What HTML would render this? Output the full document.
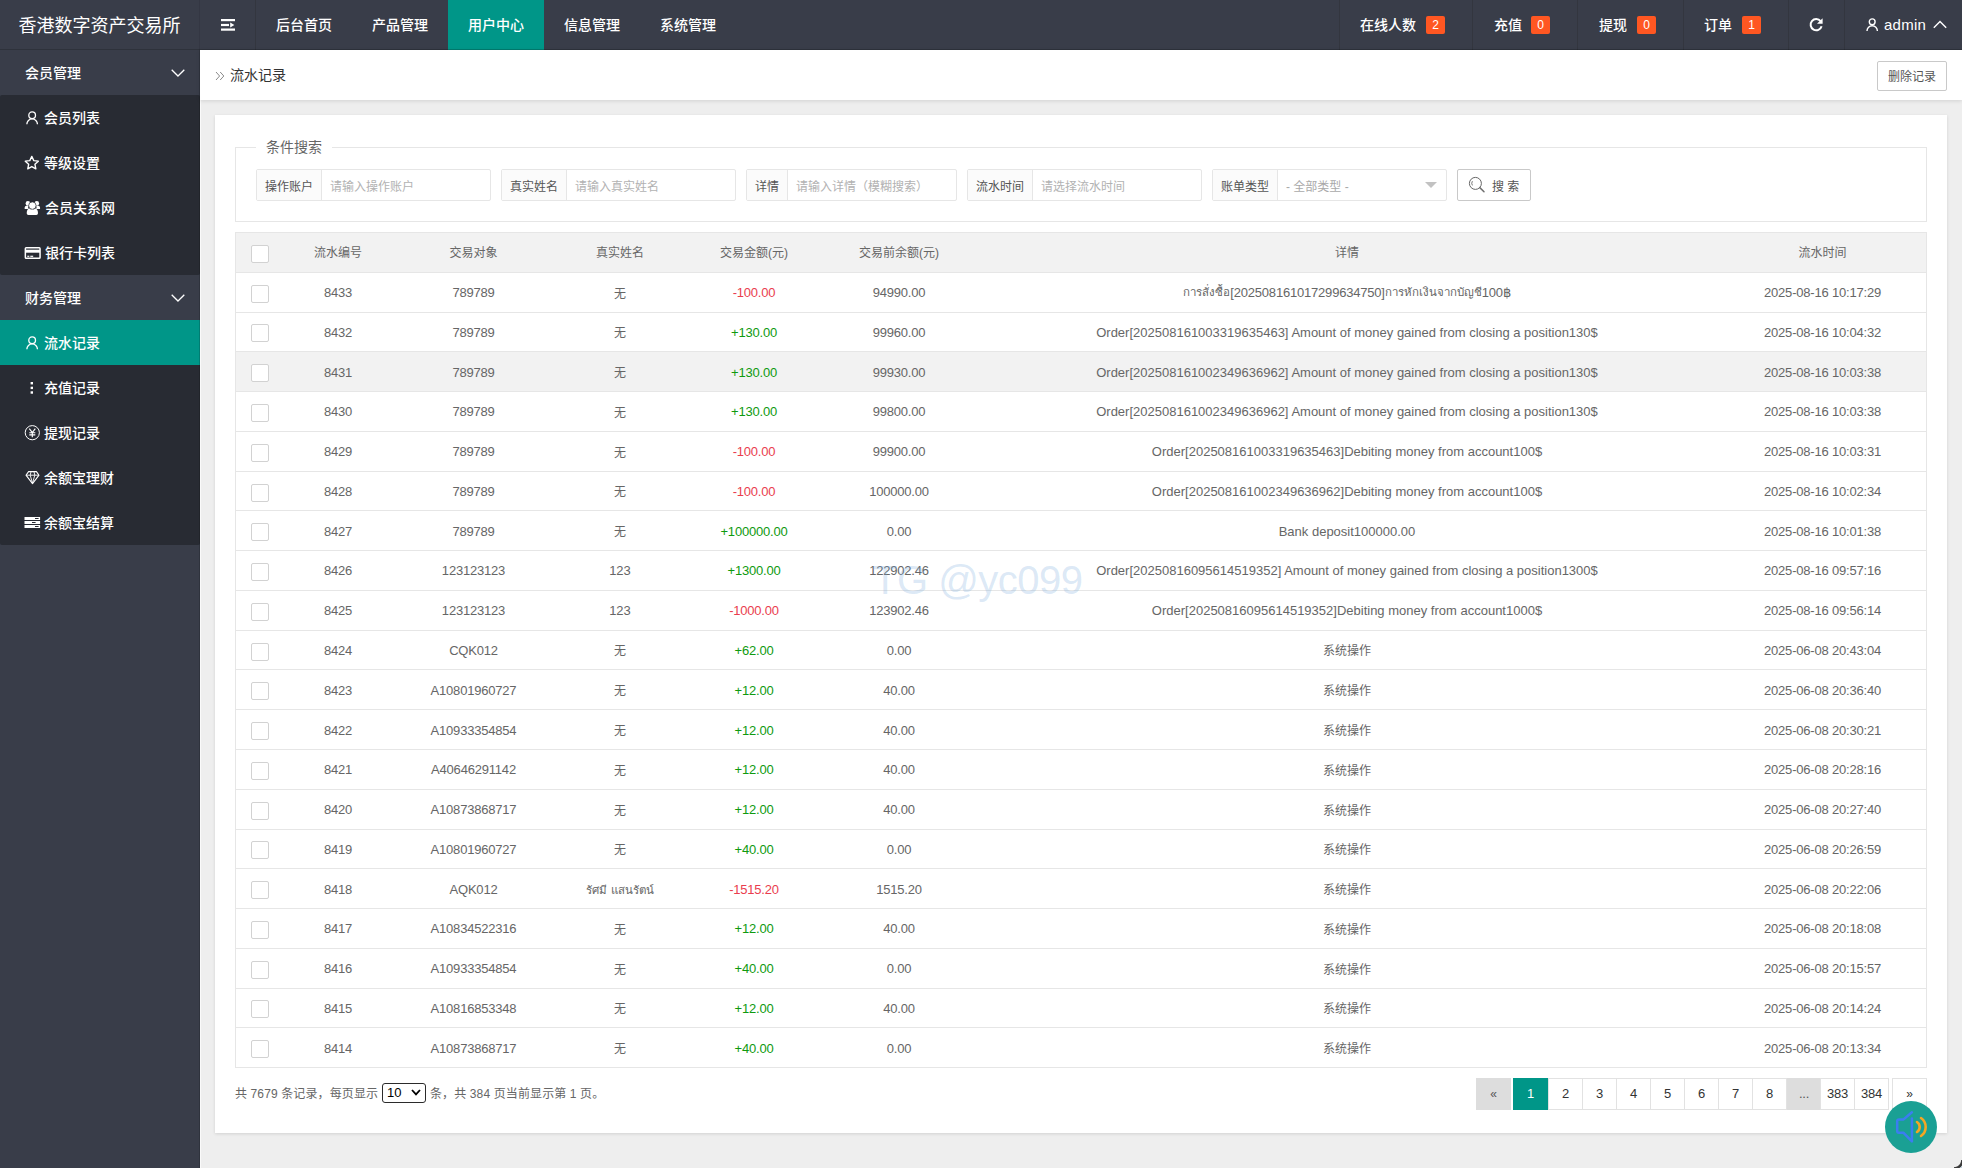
<!DOCTYPE html>
<html lang="zh-CN">
<head>
<meta charset="utf-8">
<title>流水记录</title>
<style>
*{box-sizing:border-box;margin:0;padding:0}
html,body{width:1962px;height:1168px;overflow:hidden}
body{position:relative;background:#eeeeee;font-family:"Liberation Sans","Noto Sans CJK SC",sans-serif;font-size:14px;color:#666;line-height:1}
.abs{position:absolute}
/* header */
#hd{position:absolute;left:0;top:0;width:1962px;height:50px;background:#393D49;color:#fff}
#logo{position:absolute;left:0;top:0;width:200px;height:50px;line-height:52px;text-align:center;font-size:18px;color:#fff;border-right:1px solid #343743}
#tog{position:absolute;left:200px;top:0;width:56px;height:50px;border-right:1px solid #33363f}
.nav{position:absolute;top:0;height:50px;line-height:50px;font-size:14px;color:#fff;text-align:center;white-space:nowrap}
.nav.on{background:#009688}
.rn{position:absolute;top:0;height:50px;line-height:50px;font-size:14px;color:#fff;border-left:1px solid #33363f;white-space:nowrap}
.rn .t{position:absolute;top:0}
.bdg{position:absolute;top:16px;width:19px;height:18px;line-height:18px;background:#FF5722;color:#fff;font-size:12px;text-align:center;border-radius:2px}
/* side */
#side{position:absolute;left:0;top:50px;width:200px;height:1118px;background:#393D49;color:#fff}
.sh{position:relative;height:45px;line-height:47px;padding-left:25px;font-size:14px;color:#fff}
.sh svg{position:absolute;left:171px;top:19px}
.sub{background:#282B33;border-radius:2px}
.si{position:relative;height:45px;line-height:47px;font-size:14px;color:#fff}
.si .tx{position:absolute;left:44px;top:0}
.si svg{position:absolute}
.si.on{background:#009688}
/* crumb */
#crumb{position:absolute;left:200px;top:50px;width:1762px;height:50px;background:#fff;box-shadow:0 1px 4px rgba(0,0,0,.12)}
#crumb .tt{position:absolute;left:30px;top:0;line-height:50px;font-size:14px;color:#333}
#delbtn{position:absolute;left:1677px;top:11px;width:70px;height:30px;line-height:30px;border:1px solid #c9c9c9;border-radius:2px;font-size:12px;color:#555;text-align:center;background:#fff}
/* card */
#card{position:absolute;left:215px;top:115px;width:1732px;height:1018px;background:#fff;box-shadow:0 1px 3px rgba(0,0,0,.12)}
#fs{position:absolute;left:20px;top:32px;width:1692px;height:75px;border:1px solid #e6e6e6}
#lg{position:absolute;left:20px;top:-9px;padding:0 10px;background:#fff;font-size:14px;line-height:16px;color:#666}
.grp{position:absolute;top:21px;height:32px;border:1px solid #e6e6e6;border-radius:2px;background:#fff;font-size:12px}
.grp .lb{position:absolute;left:0;top:0;height:30px;line-height:34px;overflow:hidden;background:#FBFBFB;border-right:1px solid #e6e6e6;color:#555;text-align:center}
.grp .ph{position:absolute;top:0;line-height:34px;margin-left:-1px;color:#b2b2b2;white-space:nowrap}
#sbtn{position:absolute;left:1221px;top:21px;width:74px;height:32px;border:1px solid #c9c9c9;border-radius:2px;background:#fff;font-size:12px;color:#555}
/* table */
#tb{position:absolute;left:20px;top:117px;width:1692px;border:1px solid #e6e6e6;border-bottom:none;font-size:12px;color:#666}
.th,.tr{display:flex;width:100%;border-bottom:1px solid #e6e6e6}
.th{height:39.8px;background:#f2f2f2}
.tr{height:39.78px}
.tr.hover{background:#f2f2f2}
.c{font-size:13px;padding-top:.8px;text-align:center;white-space:nowrap;overflow:visible;display:flex;align-items:center;justify-content:center;height:100%}
.c0{width:48px}.c1{width:108px}.c2{width:163px}.c3{width:130px}.c4{width:138px}.c5{width:152px}.c6{width:744px}.c7{width:207px}
.cb{display:block;position:relative;top:1.5px;width:18px;height:18px;border:1px solid #d2d2d2;border-radius:2px;background:#fff}
.neg{color:#ea3d4e}.pos{color:#0f9a0f}
/* footer */
#ft{position:absolute;left:20px;top:968px;width:500px;height:20px;font-size:12px;color:#666;line-height:20px;white-space:nowrap}
#sel{position:absolute;left:147px;top:0;width:44px;height:20px;border:1px solid #2b2b2b;border-radius:3px;background:#fff;color:#000;font-size:13px;line-height:18px;padding-left:4px}
.pg{position:absolute;top:963px;height:32px;line-height:29px;border:1px solid #e2e2e2;background:#fff;color:#333;font-size:13px;letter-spacing:-0.2px;text-align:center}
.pg.g{background:#ddd;border-color:#ddd;color:#555}
.pg.a{background:#009688;border-color:#009688;color:#fff}
#wm{position:absolute;left:873px;top:557px;font-size:40px;line-height:46px;color:rgba(120,170,220,.27);white-space:nowrap;letter-spacing:-0.5px}
#fab{position:absolute;left:1885px;top:1101px;width:52px;height:52px;border-radius:50%;background:#1AA094}

.th .c,.cj{font-size:12px}
.c1,.c2,.c4,.c5,.c7{letter-spacing:-0.2px}
.th .c{letter-spacing:0}
#ft span{position:absolute;top:1px;letter-spacing:.12px}

.c0{padding-top:0}
.th .c{padding-top:2px}
.th .c0{padding-top:0}
.thai{font-size:13px;letter-spacing:-.2px}.thai .t{font-size:11.5px;letter-spacing:0}

#hd:after{content:"";position:absolute;left:0;bottom:0;width:100%;height:1px;background:rgba(0,0,0,.18)}
#wl{position:absolute;left:200px;top:100px;width:1px;height:1068px;background:#fafafa}

#side:after{content:"";position:absolute;right:0;top:0;width:1px;height:100%;background:rgba(0,0,0,.16)}

#cr{position:absolute;left:1954px;top:1160px;width:8px;height:8px;background:radial-gradient(circle at 0 0,rgba(0,0,0,0) 6.6px,#3a3a3a 7.6px,#3a3a3a 9.2px,#c5d3dc 10px)}
.tr .cj{padding-top:2.8px}
.tr .c3.thai{padding-top:4.8px}
#hd,#side{font-weight:500}
#logo{font-weight:400}

</style>
</head>
<body>
<div id="hd">
  <div id="logo">香港数字资产交易所</div>
  <div id="tog"><svg class="abs" style="left:21px;top:18px" width="15" height="14" viewBox="0 0 15 14"><rect x="0" y="1" width="14" height="2.2" fill="#fff"/><rect x="0" y="5.9" width="8" height="2.2" fill="#fff"/><rect x="0" y="10.5" width="14" height="2.2" fill="#fff"/><path d="M9.2 4.6 L13.4 7 L9.2 9.4Z" fill="#fff"/></svg></div>
  <div class="nav" style="left:256px;width:96px">后台首页</div>
  <div class="nav" style="left:352px;width:96px">产品管理</div>
  <div class="nav on" style="left:448px;width:96px">用户中心</div>
  <div class="nav" style="left:544px;width:96px">信息管理</div>
  <div class="nav" style="left:640px;width:96px">系统管理</div>

  <div class="rn" style="left:1339px;width:133px"><span class="t" style="left:20px">在线人数</span><span class="bdg" style="left:86px">2</span></div>
  <div class="rn" style="left:1472px;width:105px"><span class="t" style="left:21px">充值</span><span class="bdg" style="left:58px">0</span></div>
  <div class="rn" style="left:1577px;width:106px"><span class="t" style="left:21px">提现</span><span class="bdg" style="left:59px">0</span></div>
  <div class="rn" style="left:1683px;width:105px"><span class="t" style="left:20px">订单</span><span class="bdg" style="left:58px">1</span></div>
  <div class="rn" style="left:1788px;width:56px"><svg class="abs" style="left:18.5px;top:17px" width="16" height="16" viewBox="0 0 16 16"><path d="M12.6 4.2 A5.6 5.6 0 1 0 13.6 9.2" fill="none" stroke="#fff" stroke-width="2"/><path d="M14.6 1.2 L14.6 6.8 L9 6.8Z" fill="#fff"/></svg></div>
  <div class="rn" style="left:1844px;width:118px"><svg class="abs" style="left:21px;top:18px" width="13" height="14" viewBox="0 0 13 14"><circle cx="6.2" cy="3.8" r="2.9" fill="none" stroke="#fff" stroke-width="1.4"/><path d="M1 13 A5.2 5.2 0 0 1 11.4 13" fill="none" stroke="#fff" stroke-width="1.4"/></svg><span class="t" style="left:39px;font-size:15px;letter-spacing:.25px">admin</span><svg class="abs" style="left:88px;top:20px" width="14" height="9" viewBox="0 0 14 9"><path d="M0.8 7.8 L7 1.4 L13.2 7.8" fill="none" stroke="#fff" stroke-width="1.4"/></svg></div>
</div>

<div id="side">
  <div class="sh">会员管理<svg width="14" height="8" viewBox="0 0 14 8"><path d="M0.7 0.7 L7 7 L13.3 0.7" fill="none" stroke="#fff" stroke-width="1.3"/></svg></div>
  <div class="sub">
    <div class="si"><svg style="left:26px;top:16px" width="13" height="14" viewBox="0 0 13 14"><circle cx="6.15" cy="4.25" r="3.35" fill="none" stroke="#fff" stroke-width="1.3"/><path d="M0.85 13.2 A5.3 5.3 0 0 1 11.45 13.2" fill="none" stroke="#fff" stroke-width="1.3"/></svg><span class="tx">会员列表</span></div>
    <div class="si"><svg style="left:24.4px;top:14.8px" width="15.6" height="15.6" viewBox="0 0 15 15"><path d="M7.5 1.3 L9.4 5.4 L13.8 5.9 L10.5 8.9 L11.4 13.3 L7.5 11.1 L3.6 13.3 L4.5 8.9 L1.2 5.9 L5.6 5.4Z" fill="none" stroke="#fff" stroke-width="1.3" stroke-linejoin="round"/></svg><span class="tx">等级设置</span></div>
    <div class="si"><svg style="left:24px;top:15px" width="17" height="16" viewBox="0 0 17 16"><circle cx="3.9" cy="3.4" r="2.3" fill="#fff"/><circle cx="12.8" cy="3.4" r="2.3" fill="#fff"/><path d="M0.6 8.4 L0.6 7.8 Q0.6 5.7 2.7 5.7 L4.6 5.7 Q3.6 7.4 4.6 9 L1.4 9 Q0.6 9 0.6 8.4Z" fill="#fff"/><path d="M16.1 8.4 L16.1 7.8 Q16.1 5.7 14 5.7 L12.1 5.7 Q13.1 7.4 12.1 9 L15.3 9 Q16.1 9 16.1 8.4Z" fill="#fff"/><circle cx="8.35" cy="5.6" r="3.7" fill="#fff" stroke="#282B33" stroke-width="0.7"/><path d="M2.7 13.3 Q2.7 8.8 5.3 8.4 Q8.35 10.8 11.4 8.4 Q14 8.8 14 13.3 Q14 15.1 12.3 15.1 L4.4 15.1 Q2.7 15.1 2.7 13.3Z" fill="#fff"/></svg><span class="tx" style="left:45px">会员关系网</span></div>
    <div class="si"><svg style="left:24px;top:16px" width="18" height="14" viewBox="0 0 18 14"><rect x="1.35" y="1.85" width="14.7" height="10.5" rx="0.8" fill="none" stroke="#fff" stroke-width="1.5"/><rect x="1.35" y="3.7" width="14.7" height="3" fill="#fff"/><rect x="3.3" y="9.7" width="2" height="1.2" fill="#fff"/><rect x="6.3" y="9.7" width="2.9" height="1.2" fill="#fff"/></svg><span class="tx" style="left:45px">银行卡列表</span></div>
  </div>
  <div class="sh">财务管理<svg width="14" height="8" viewBox="0 0 14 8"><path d="M0.7 0.7 L7 7 L13.3 0.7" fill="none" stroke="#fff" stroke-width="1.3"/></svg></div>
  <div class="sub">
    <div class="si on"><svg style="left:26px;top:16px" width="13" height="14" viewBox="0 0 13 14"><circle cx="6.15" cy="4.25" r="3.35" fill="none" stroke="#fff" stroke-width="1.3"/><path d="M0.85 13.2 A5.3 5.3 0 0 1 11.45 13.2" fill="none" stroke="#fff" stroke-width="1.3"/></svg><span class="tx">流水记录</span></div>
    <div class="si"><svg style="left:30px;top:16px" width="4" height="14" viewBox="0 0 4 14"><rect x="0.6" y="1" width="2.4" height="2.4" fill="#fff"/><rect x="0.6" y="5.7" width="2.4" height="2.4" fill="#fff"/><rect x="0.6" y="10.3" width="2.4" height="2.4" fill="#fff"/></svg><span class="tx">充值记录</span></div>
    <div class="si"><svg style="left:24px;top:14px" width="17" height="17" viewBox="0 0 17 17"><circle cx="8.3" cy="8.7" r="7.1" fill="none" stroke="#fff" stroke-width="1"/><path d="M5.3 4.6 L8.3 8.5 L11.3 4.6 M8.3 8.5 L8.3 13.3 M5.3 8.7 L11.3 8.7 M5.3 10.8 L11.3 10.8" fill="none" stroke="#fff" stroke-width="1.15"/></svg><span class="tx">提现记录</span></div>
    <div class="si"><svg style="left:24.5px;top:15.3px" width="15" height="15" viewBox="0 0 15 15"><path d="M3.6 1.6 L11.4 1.6 L14 5.2 L7.5 13.6 L1 5.2Z" fill="none" stroke="#fff" stroke-width="1.1" stroke-linejoin="round"/><path d="M1 5.2 L14 5.2 M5.2 5.2 L7.5 13.2 L9.8 5.2 M5.2 5.2 L6 1.8 M9.8 5.2 L9 1.8" fill="none" stroke="#fff" stroke-width="0.9"/></svg><span class="tx">余额宝理财</span></div>
    <div class="si"><svg style="left:24px;top:16px" width="17" height="13" viewBox="0 0 17 13"><rect x="0.5" y="1" width="15.6" height="3" fill="#fff"/><rect x="0.5" y="5" width="15.6" height="3" fill="#fff"/><rect x="0.5" y="9" width="15.6" height="3" fill="#fff"/><rect x="11" y="2" width="3.6" height="1" fill="#282B33"/><rect x="8" y="6" width="3.6" height="1" fill="#282B33"/><rect x="11" y="10" width="3.6" height="1" fill="#282B33"/></svg><span class="tx">余额宝结算</span></div>
  </div>
</div>

<div id="wl"></div>
<div id="crumb">
  <svg class="abs" style="left:15px;top:21px" width="10" height="10" viewBox="0 0 10 10"><path d="M1 1 L4.6 5 L1 9 M5.2 1 L8.8 5 L5.2 9" fill="none" stroke="#8a8a8a" stroke-width="1"/></svg>
  <span class="tt">流水记录</span>
  <div id="delbtn">删除记录</div>
</div>

<div id="card">
  <div id="fs">
    <div id="lg">条件搜索</div>
    <div class="grp" style="left:20px;width:235px"><div class="lb" style="width:65px">操作账户</div><div class="ph" style="left:74px">请输入操作账户</div></div>
    <div class="grp" style="left:265px;width:235px"><div class="lb" style="width:65px">真实姓名</div><div class="ph" style="left:74px">请输入真实姓名</div></div>
    <div class="grp" style="left:510px;width:211px"><div class="lb" style="width:41px">详情</div><div class="ph" style="left:50px">请输入详情（模糊搜索）</div></div>
    <div class="grp" style="left:731px;width:235px"><div class="lb" style="width:65px">流水时间</div><div class="ph" style="left:74px">请选择流水时间</div></div>
    <div class="grp" style="left:976px;width:235px"><div class="lb" style="width:65px">账单类型</div><div class="ph" style="left:74px;color:#a9a9a9">- 全部类型 -</div><i class="abs" style="right:9px;top:12px;width:0;height:0;border:6px solid transparent;border-top-color:#c2c2c2;border-bottom:none"></i></div>
    <div id="sbtn"><svg class="abs" style="left:10px;top:6px" width="18" height="18" viewBox="0 0 18 18"><circle cx="7.4" cy="7.4" r="6" fill="none" stroke="#666" stroke-width="1"/><path d="M4.4 5.2 A3.8 3.8 0 0 0 4.4 9.4" fill="none" stroke="#666" stroke-width="0.9"/><path d="M11.8 11.6 L16 15.8" fill="none" stroke="#707070" stroke-width="1.5" stroke-linecap="round"/></svg><span class="abs" style="left:34px;top:0;line-height:34px;white-space:pre">搜 索</span></div>
  </div>

  <div id="tb">
    <div class="th"><div class="c c0"><i class="cb"></i></div><div class="c c1">流水编号</div><div class="c c2">交易对象</div><div class="c c3">真实姓名</div><div class="c c4">交易金额(元)</div><div class="c c5">交易前余额(元)</div><div class="c c6">详情</div><div class="c c7">流水时间</div></div>
<div class="tr"><div class="c c0"><i class="cb"></i></div><div class="c c1">8433</div><div class="c c2">789789</div><div class="c c3 cj">无</div><div class="c c4 neg">-100.00</div><div class="c c5">94990.00</div><div class="c c6 thai"><span class="t">การสั่งซื้อ</span>[202508161017299634750]<span class="t">การหักเงินจากบัญชี</span>100฿</div><div class="c c7">2025-08-16 10:17:29</div></div>
<div class="tr"><div class="c c0"><i class="cb"></i></div><div class="c c1">8432</div><div class="c c2">789789</div><div class="c c3 cj">无</div><div class="c c4 pos">+130.00</div><div class="c c5">99960.00</div><div class="c c6">Order[202508161003319635463] Amount of money gained from closing a position130$</div><div class="c c7">2025-08-16 10:04:32</div></div>
<div class="tr hover"><div class="c c0"><i class="cb"></i></div><div class="c c1">8431</div><div class="c c2">789789</div><div class="c c3 cj">无</div><div class="c c4 pos">+130.00</div><div class="c c5">99930.00</div><div class="c c6">Order[202508161002349636962] Amount of money gained from closing a position130$</div><div class="c c7">2025-08-16 10:03:38</div></div>
<div class="tr"><div class="c c0"><i class="cb"></i></div><div class="c c1">8430</div><div class="c c2">789789</div><div class="c c3 cj">无</div><div class="c c4 pos">+130.00</div><div class="c c5">99800.00</div><div class="c c6">Order[202508161002349636962] Amount of money gained from closing a position130$</div><div class="c c7">2025-08-16 10:03:38</div></div>
<div class="tr"><div class="c c0"><i class="cb"></i></div><div class="c c1">8429</div><div class="c c2">789789</div><div class="c c3 cj">无</div><div class="c c4 neg">-100.00</div><div class="c c5">99900.00</div><div class="c c6">Order[202508161003319635463]Debiting money from account100$</div><div class="c c7">2025-08-16 10:03:31</div></div>
<div class="tr"><div class="c c0"><i class="cb"></i></div><div class="c c1">8428</div><div class="c c2">789789</div><div class="c c3 cj">无</div><div class="c c4 neg">-100.00</div><div class="c c5">100000.00</div><div class="c c6">Order[202508161002349636962]Debiting money from account100$</div><div class="c c7">2025-08-16 10:02:34</div></div>
<div class="tr"><div class="c c0"><i class="cb"></i></div><div class="c c1">8427</div><div class="c c2">789789</div><div class="c c3 cj">无</div><div class="c c4 pos">+100000.00</div><div class="c c5">0.00</div><div class="c c6">Bank deposit100000.00</div><div class="c c7">2025-08-16 10:01:38</div></div>
<div class="tr"><div class="c c0"><i class="cb"></i></div><div class="c c1">8426</div><div class="c c2">123123123</div><div class="c c3">123</div><div class="c c4 pos">+1300.00</div><div class="c c5">122902.46</div><div class="c c6">Order[20250816095614519352] Amount of money gained from closing a position1300$</div><div class="c c7">2025-08-16 09:57:16</div></div>
<div class="tr"><div class="c c0"><i class="cb"></i></div><div class="c c1">8425</div><div class="c c2">123123123</div><div class="c c3">123</div><div class="c c4 neg">-1000.00</div><div class="c c5">123902.46</div><div class="c c6">Order[20250816095614519352]Debiting money from account1000$</div><div class="c c7">2025-08-16 09:56:14</div></div>
<div class="tr"><div class="c c0"><i class="cb"></i></div><div class="c c1">8424</div><div class="c c2">CQK012</div><div class="c c3 cj">无</div><div class="c c4 pos">+62.00</div><div class="c c5">0.00</div><div class="c c6 cj">系统操作</div><div class="c c7">2025-06-08 20:43:04</div></div>
<div class="tr"><div class="c c0"><i class="cb"></i></div><div class="c c1">8423</div><div class="c c2">A10801960727</div><div class="c c3 cj">无</div><div class="c c4 pos">+12.00</div><div class="c c5">40.00</div><div class="c c6 cj">系统操作</div><div class="c c7">2025-06-08 20:36:40</div></div>
<div class="tr"><div class="c c0"><i class="cb"></i></div><div class="c c1">8422</div><div class="c c2">A10933354854</div><div class="c c3 cj">无</div><div class="c c4 pos">+12.00</div><div class="c c5">40.00</div><div class="c c6 cj">系统操作</div><div class="c c7">2025-06-08 20:30:21</div></div>
<div class="tr"><div class="c c0"><i class="cb"></i></div><div class="c c1">8421</div><div class="c c2">A40646291142</div><div class="c c3 cj">无</div><div class="c c4 pos">+12.00</div><div class="c c5">40.00</div><div class="c c6 cj">系统操作</div><div class="c c7">2025-06-08 20:28:16</div></div>
<div class="tr"><div class="c c0"><i class="cb"></i></div><div class="c c1">8420</div><div class="c c2">A10873868717</div><div class="c c3 cj">无</div><div class="c c4 pos">+12.00</div><div class="c c5">40.00</div><div class="c c6 cj">系统操作</div><div class="c c7">2025-06-08 20:27:40</div></div>
<div class="tr"><div class="c c0"><i class="cb"></i></div><div class="c c1">8419</div><div class="c c2">A10801960727</div><div class="c c3 cj">无</div><div class="c c4 pos">+40.00</div><div class="c c5">0.00</div><div class="c c6 cj">系统操作</div><div class="c c7">2025-06-08 20:26:59</div></div>
<div class="tr"><div class="c c0"><i class="cb"></i></div><div class="c c1">8418</div><div class="c c2">AQK012</div><div class="c c3 thai"><span class="t">รัศมี แสนรัตน์</span></div><div class="c c4 neg">-1515.20</div><div class="c c5">1515.20</div><div class="c c6 cj">系统操作</div><div class="c c7">2025-06-08 20:22:06</div></div>
<div class="tr"><div class="c c0"><i class="cb"></i></div><div class="c c1">8417</div><div class="c c2">A10834522316</div><div class="c c3 cj">无</div><div class="c c4 pos">+12.00</div><div class="c c5">40.00</div><div class="c c6 cj">系统操作</div><div class="c c7">2025-06-08 20:18:08</div></div>
<div class="tr"><div class="c c0"><i class="cb"></i></div><div class="c c1">8416</div><div class="c c2">A10933354854</div><div class="c c3 cj">无</div><div class="c c4 pos">+40.00</div><div class="c c5">0.00</div><div class="c c6 cj">系统操作</div><div class="c c7">2025-06-08 20:15:57</div></div>
<div class="tr"><div class="c c0"><i class="cb"></i></div><div class="c c1">8415</div><div class="c c2">A10816853348</div><div class="c c3 cj">无</div><div class="c c4 pos">+12.00</div><div class="c c5">40.00</div><div class="c c6 cj">系统操作</div><div class="c c7">2025-06-08 20:14:24</div></div>
<div class="tr"><div class="c c0"><i class="cb"></i></div><div class="c c1">8414</div><div class="c c2">A10873868717</div><div class="c c3 cj">无</div><div class="c c4 pos">+40.00</div><div class="c c5">0.00</div><div class="c c6 cj">系统操作</div><div class="c c7">2025-06-08 20:13:34</div></div>
  </div>

  <div id="ft"><span style="left:0">共 7679 条记录，每页显示</span><div id="sel">10<svg class="abs" style="right:4px;top:5px" width="10" height="7" viewBox="0 0 10 7"><path d="M1 1 L5 5.4 L9 1" fill="none" stroke="#000" stroke-width="1.8"/></svg></div><span style="left:195px">条，共 384 页当前显示第 1 页。</span></div>

  <div class="pg g" style="left:1261px;width:35px;font-size:12px;line-height:31px">«</div>
  <div class="pg a" style="left:1298px;width:35px">1</div>
  <div class="pg" style="left:1333px;width:35px">2</div>
  <div class="pg" style="left:1367px;width:35px">3</div>
  <div class="pg" style="left:1401px;width:35px">4</div>
  <div class="pg" style="left:1435px;width:35px">5</div>
  <div class="pg" style="left:1469px;width:35px">6</div>
  <div class="pg" style="left:1503px;width:35px">7</div>
  <div class="pg" style="left:1537px;width:35px">8</div>
  <div class="pg g" style="left:1572px;width:34px">...</div>
  <div class="pg" style="left:1605px;width:35px">383</div>
  <div class="pg" style="left:1639px;width:35px">384</div>
  <div class="pg" style="left:1677px;width:35px;font-size:12px;line-height:31px">»</div>
</div>

<div id="wm">TG @yc099</div>

<div id="fab"><svg class="abs" style="left:10px;top:9px" width="34" height="34" viewBox="0 0 34 34"><path d="M16.9 2.2 L8.6 9.4 L4 9.4 Q2.2 9.4 2.2 11.2 L2.2 21 Q2.2 22.8 4 22.8 L8.6 22.8 L16.9 31.4 L16.9 8.6" fill="none" stroke="#3B7DF0" stroke-width="2.5" stroke-linejoin="round" stroke-linecap="round"/><path d="M22 12 A6 6 0 0 1 22 22" fill="none" stroke="#F5A623" stroke-width="2.6" stroke-linecap="round"/><path d="M26 8 A11 11 0 0 1 26 26" fill="none" stroke="#F5A623" stroke-width="2.6" stroke-linecap="round"/></svg></div>
<div id="cr"></div>
</body>
</html>
